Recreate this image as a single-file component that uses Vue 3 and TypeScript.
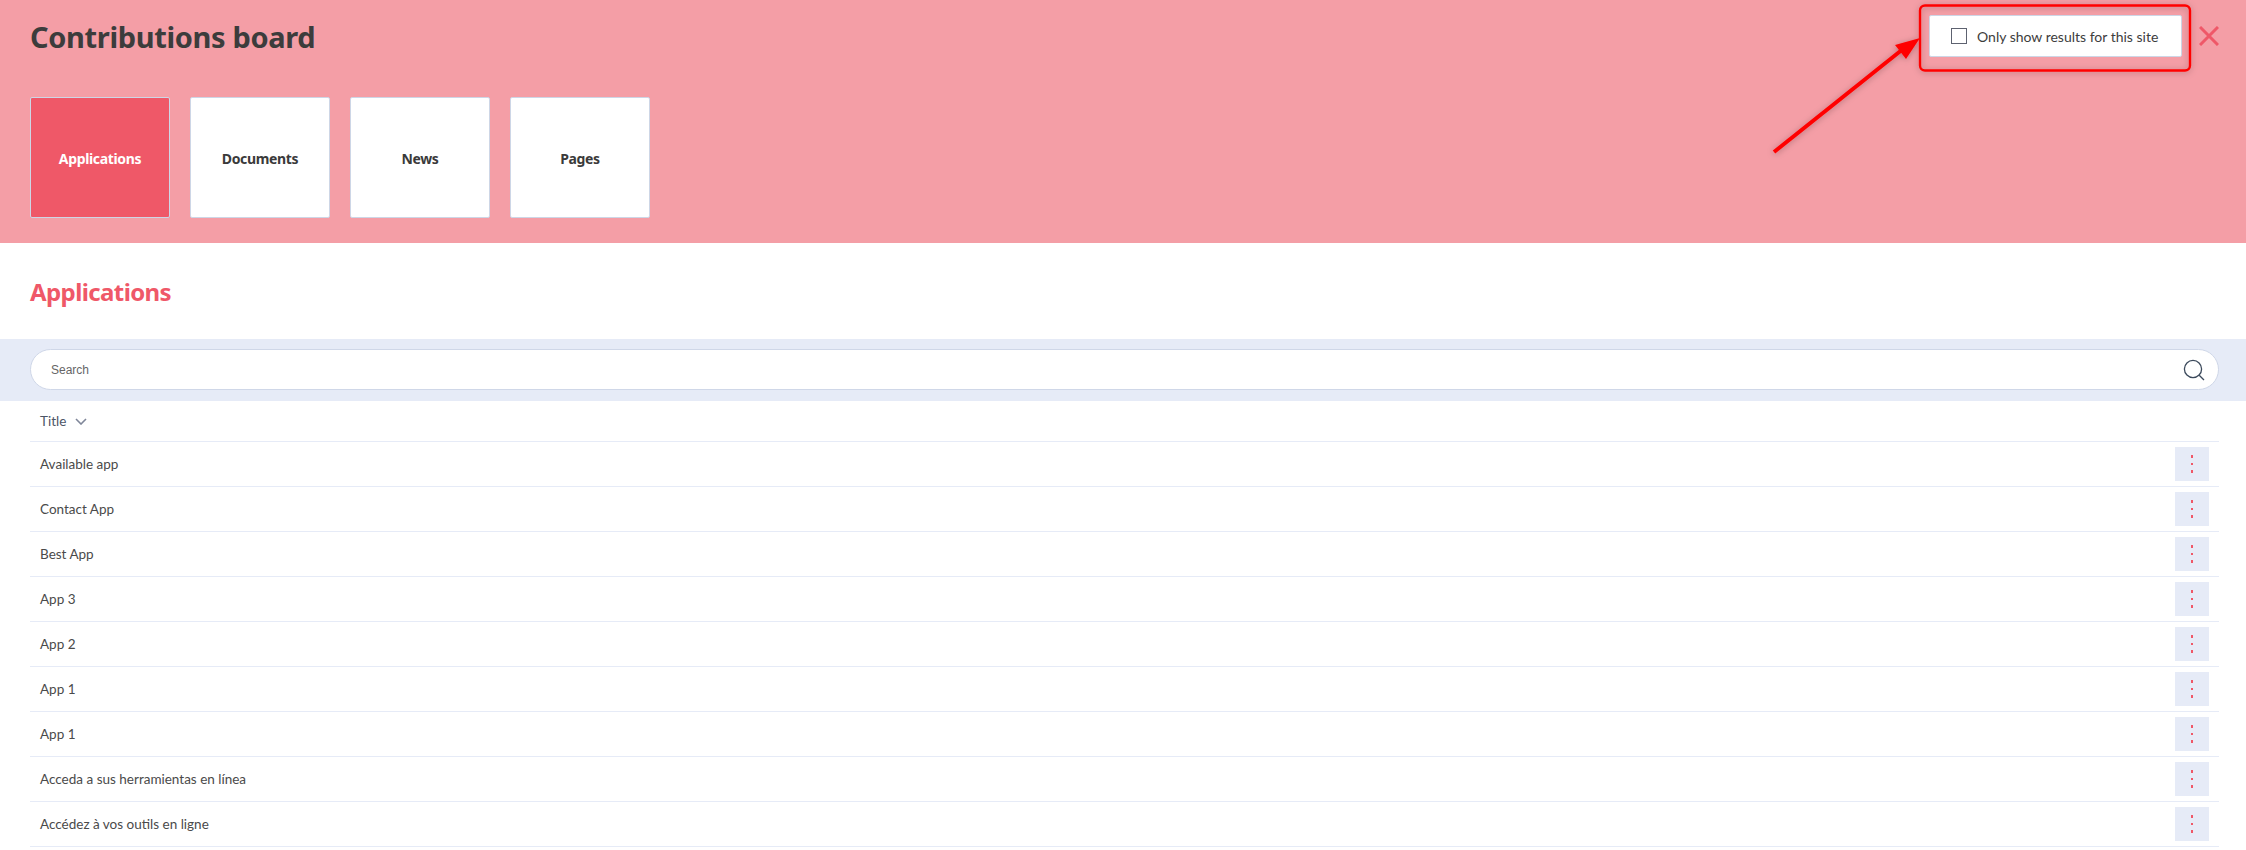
<script setup lang="ts">
const tabs: string[] = ['Applications', 'Documents', 'News', 'Pages']
const rows: string[] = [
  'Available app',
  'Contact App',
  'Best App',
  'App 3',
  'App 2',
  'App 1',
  'App 1',
  'Acceda a sus herramientas en línea',
  'Accédez à vos outils en ligne'
]
</script>

<template>
  <div class="page">
    <header class="hero">
      <div class="hero-top">
        <h1 class="title">Contributions board</h1>
        <div class="hero-actions">
          <label class="filter">
            <span class="check"></span>
            <span>Only show results for this site</span>
          </label>
          <svg class="close" width="20" height="20" viewBox="0 0 20 20" fill="none" stroke="#ef5868" stroke-width="3">
            <path d="M1 1 19 19M19 1 1 19" />
          </svg>
        </div>
      </div>
      <nav class="tabs">
        <div v-for="(t, i) in tabs" :key="t" class="tab" :class="{ active: i === 0 }">{{ t }}</div>
      </nav>
    </header>

    <h2 class="section">Applications</h2>

    <div class="search-band">
      <div class="search">
        <span class="placeholder">Search</span>
        <svg width="22" height="22" viewBox="0 0 22 22" fill="none" stroke="#3c4a5c" stroke-width="1.3">
          <circle cx="10" cy="10" r="8.6" />
          <path d="M16.2 16.2 21 21" />
        </svg>
      </div>
    </div>

    <div class="table">
      <div class="head">
        <span>Title</span>
        <svg width="12" height="7" viewBox="0 0 12 7" fill="none" stroke="#7f8699" stroke-width="1.6">
          <path d="M1 1 6 6 11 1" />
        </svg>
      </div>
      <div v-for="(r, i) in rows" :key="i" class="row">
        <span>{{ r }}</span>
        <button class="kebab"><i></i><i></i><i></i></button>
      </div>
    </div>

    <svg class="annotation" width="2246" height="850" viewBox="0 0 2246 850" fill="none">
      <defs>
        <filter id="sh" x="-20%" y="-20%" width="140%" height="140%">
          <feDropShadow dx="0" dy="1" stdDeviation="3" flood-color="#000" flood-opacity="0.28" />
        </filter>
      </defs>
      <g filter="url(#sh)">
        <rect x="1920" y="5.5" width="270" height="65" rx="5" stroke="#ff0000" stroke-width="2.4" />
        <path d="M1774 152 1903 49" stroke="#ff0000" stroke-width="4" />
        <path d="M1920 38 1906 59 1895 45Z" fill="#ff0000" />
      </g>
    </svg>
  </div>
</template>

<style>
html, body { margin: 0; background: #fff; overflow: hidden; }
</style>

<style scoped>
.page {
  position: relative;
  width: 2246px;
  font-family: "Noto Sans", "Open Sans", sans-serif;
  color: #3d3d3d;
}
.hero {
  height: 243px;
  box-sizing: border-box;
  padding: 15px 27px 0 30px;
  background: #f49ea6;
}
.hero-top {
  display: flex;
  justify-content: space-between;
  align-items: center;
  height: 42px;
}
.title {
  margin: 0;
  font-size: 29px;
  font-weight: 700;
  color: #3c3c3c;
  letter-spacing: -0.35px;
}
.hero-actions {
  display: flex;
  align-items: center;
  gap: 17px;
}
.filter {
  display: flex;
  align-items: center;
  gap: 10px;
  box-sizing: border-box;
  width: 253px;
  height: 42px;
  padding-left: 21px;
  background: #fff;
  border: 1px solid #cdd6e6;
  border-radius: 2px;
  font-family: Lato, "Noto Sans", sans-serif;
  font-size: 14px;
  color: #3d3d3d;
  white-space: nowrap;
}
.check {
  width: 16px;
  height: 16px;
  box-sizing: border-box;
  border: 1px solid #5d6270;
  flex: none;
}
.close { display: block; }
.tabs {
  display: flex;
  gap: 20px;
  margin-top: 40px;
}
.tab {
  display: flex;
  align-items: center;
  justify-content: center;
  box-sizing: border-box;
  width: 140px;
  height: 121px;
  padding-top: 2px;
  background: #fff;
  border: 1px solid #cdd6e6;
  border-radius: 2px;
  font-size: 14px;
  font-weight: 700;
  color: #3a3a3a;
  letter-spacing: -0.35px;
}
.tab.active {
  background: #ef5868;
  color: #fff;
}
.section {
  display: flex;
  align-items: center;
  height: 96px;
  margin: 0;
  padding-left: 30px;
  font-size: 24px;
  font-weight: 700;
  color: #ef5868;
  letter-spacing: -0.6px;
}
.search-band {
  height: 62px;
  box-sizing: border-box;
  padding: 10px 27px 0 30px;
  background: #e6ebf7;
}
.search {
  display: flex;
  align-items: center;
  justify-content: space-between;
  box-sizing: border-box;
  height: 41px;
  padding: 0 13px 0 20px;
  background: #fff;
  border: 1px solid #cfd7e8;
  border-radius: 21px;
}
.placeholder {
  font-family: "Liberation Sans", Arial, sans-serif;
  font-size: 12px;
  color: #666;
}
.table {
  margin: 0 27px 0 30px;
}
.head {
  display: flex;
  align-items: center;
  gap: 9px;
  box-sizing: border-box;
  height: 41px;
  padding-left: 10px;
  border-bottom: 1px solid #e6ebf7;
  font-family: Lato, "Noto Sans", sans-serif;
  font-size: 13.5px;
  color: #4c5566;
}
.row {
  display: flex;
  align-items: center;
  justify-content: space-between;
  box-sizing: border-box;
  height: 45px;
  padding: 0 10px;
  border-bottom: 1px solid #e6ebf7;
  font-family: Lato, "Noto Sans", sans-serif;
  font-size: 13.5px;
  color: #4a4a4a;
}
.kebab {
  display: flex;
  flex-direction: column;
  align-items: center;
  justify-content: center;
  gap: 5px;
  width: 34px;
  height: 34px;
  padding: 0;
  border: 0;
  background: #e6ebf7;
}
.kebab i {
  display: block;
  width: 2.5px;
  height: 2.5px;
  background: #ef5868;
}
.annotation {
  position: absolute;
  top: 0;
  left: 0;
  pointer-events: none;
}
</style>
